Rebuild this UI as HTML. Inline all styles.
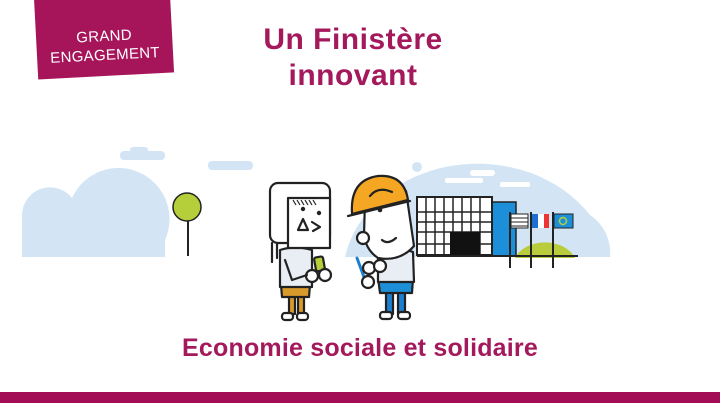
<!DOCTYPE html>
<html><head><meta charset="utf-8"><style>
html,body{margin:0;padding:0;background:#fff;width:720px;height:403px;overflow:hidden;position:relative;font-family:"Liberation Sans",sans-serif}
.badge{position:absolute;left:36px;top:-6px;width:136px;height:82px;background:#a6155a;transform:rotate(-3deg);color:#fff;font-size:15px;line-height:19px;text-align:center;letter-spacing:0.3px}
.badge div{position:absolute;left:0;right:0;top:33px}
.t1{position:absolute;left:200px;width:306px;top:22px;text-align:center;color:#a3195b;font-size:30px;line-height:36px;font-weight:bold;letter-spacing:0.5px}
.t2{position:absolute;left:0;width:720px;top:334px;text-align:center;color:#a3195b;font-size:25px;font-weight:bold;letter-spacing:0.2px}
.bar{position:absolute;left:0;top:392px;width:720px;height:11px;background:#a30d55}
svg{position:absolute;left:0;top:0}
</style></head><body>
<svg width="720" height="403" viewBox="0 0 720 403">
<g fill="#d3e5f5">
<path d="M22 257 L22 215 A28 28 0 0 1 72 198 A48 48 0 0 1 165 240 L165 257 Z"/>
<rect x="120" y="151" width="45" height="9" rx="4"/><rect x="130" y="147" width="18" height="6" rx="3"/>
<rect x="208" y="161" width="45" height="9" rx="4"/>
<path d="M345 257 A135 115 0 0 1 590 215 A45 45 0 0 1 610 257 Z"/>
<circle cx="417" cy="167" r="5"/>
</g>
<g fill="#fff"><rect x="470" y="170" width="25" height="6" rx="3"/><rect x="445" y="178" width="38" height="5" rx="2"/><rect x="500" y="182" width="30" height="5" rx="2"/></g>
<path d="M515 258 A32 24 0 0 1 575 258 Z" fill="#b9cc3b"/>
<line x1="188" y1="210" x2="188" y2="256" stroke="#222" stroke-width="2"/>
<circle cx="187" cy="207" r="14" fill="#b5cf3a" stroke="#222" stroke-width="1.5"/>
<rect x="490" y="202" width="26" height="54" fill="#1d8fd9" stroke="#222" stroke-width="1.5"/>
<rect x="417" y="197" width="75" height="58" fill="#fff" stroke="#222" stroke-width="2"/>
<g stroke="#222" stroke-width="1.5">
<line x1="426" y1="197" x2="426" y2="255"/><line x1="435" y1="197" x2="435" y2="255"/><line x1="444" y1="197" x2="444" y2="255"/><line x1="453" y1="197" x2="453" y2="232"/><line x1="462" y1="197" x2="462" y2="232"/><line x1="471" y1="197" x2="471" y2="232"/><line x1="480" y1="197" x2="480" y2="255"/>
<line x1="417" y1="212" x2="492" y2="212"/><line x1="417" y1="222" x2="492" y2="222"/><line x1="417" y1="232" x2="492" y2="232"/><line x1="417" y1="244" x2="492" y2="244"/>
</g>
<rect x="450" y="232" width="30" height="23" fill="#111"/>
<line x1="417" y1="256" x2="578" y2="256" stroke="#222" stroke-width="2"/>
<g stroke="#222" stroke-width="2"><line x1="510" y1="212" x2="510" y2="268"/><line x1="531" y1="212" x2="531" y2="268"/><line x1="553" y1="212" x2="553" y2="268"/></g>
<rect x="511" y="214" width="17" height="14" fill="#fff" stroke="#222"/>
<g stroke="#222"><line x1="511" y1="218" x2="528" y2="218"/><line x1="511" y1="222" x2="528" y2="222"/><line x1="511" y1="226" x2="528" y2="226"/></g>
<rect x="532" y="214" width="6" height="14" fill="#1d6fd0"/><rect x="538" y="214" width="6" height="14" fill="#fff"/><rect x="544" y="214" width="5" height="14" fill="#e33"/>
<rect x="554" y="214" width="19" height="14" fill="#1d8fd9" stroke="#222"/><circle cx="563" cy="221" r="3.5" fill="none" stroke="#b5cf3a" stroke-width="1.5"/>
<g stroke="#222" stroke-width="2.2" stroke-linejoin="round" stroke-linecap="round">
<rect x="289" y="296" width="6" height="18" fill="#d99a2b"/><rect x="298" y="296" width="6" height="18" fill="#d99a2b"/>
<path d="M281 285 L310 285 L309 297 L282 297 Z" fill="#d99a2b"/>
<path d="M280 250 Q295 245 312 250 L312 287 L280 287 Z" fill="#e9eef5"/>
<rect x="282" y="313" width="11" height="7" rx="3" fill="#fff"/><rect x="297" y="313" width="11" height="7" rx="3" fill="#fff"/>
<rect x="270" y="183" width="60" height="60" rx="8" fill="#fff"/>
<rect x="288" y="198" width="42" height="50" fill="#fff"/>
<line x1="272" y1="243" x2="272" y2="262"/><line x1="277" y1="243" x2="277" y2="258"/>
<path d="M298 230 L303 219 L308 230 Z" fill="#fff"/>
<path d="M312 222 L320 227 L313 231" fill="none"/>
<rect x="315" y="257" width="9" height="14" rx="2" fill="#b5cf3a" transform="rotate(-10 319 264)"/>
<circle cx="312" cy="276" r="6" fill="#fff"/><circle cx="325" cy="275" r="6" fill="#fff"/>
<path d="M285 260 L292 280 L307 275" fill="none"/>
</g>
<circle cx="303" cy="209" r="2.2" fill="#222"/><circle cx="319" cy="213" r="2.2" fill="#222"/>
<g stroke="#222" stroke-width="1.2"><line x1="293" y1="200" x2="296" y2="205"/><line x1="297" y1="200" x2="300" y2="205"/><line x1="301" y1="200" x2="304" y2="205"/><line x1="305" y1="200" x2="308" y2="205"/><line x1="309" y1="200" x2="312" y2="205"/><line x1="313" y1="200" x2="316" y2="205"/></g>
<g stroke="#222" stroke-width="2.2" stroke-linejoin="round" stroke-linecap="round">
<rect x="386" y="290" width="7" height="24" fill="#1d7fd0"/><rect x="398" y="290" width="7" height="24" fill="#1d7fd0"/>
<path d="M378 278 L413 278 L412 293 L380 293 Z" fill="#1d8fd9"/>
<path d="M378 255 Q395 245 413 252 L414 282 L378 282 Z" fill="#e9eef5"/>
<rect x="380" y="312" width="12" height="7" rx="3" fill="#fff"/><rect x="398" y="312" width="12" height="7" rx="3" fill="#fff"/>
<path d="M365 200 L406 191 L414 246 Q400 262 378 258 Q366 250 364 235 Z" fill="#fff"/>
<circle cx="363" cy="238" r="6" fill="#fff"/>
<path d="M352 213 Q350 180 378 176 Q404 174 408 200 L352 214 Z" fill="#f5a623"/>
<path d="M348 216 L410 201" fill="none"/>
<path d="M370 196 Q378 186 392 192" fill="none"/>
<path d="M382 240 Q388 245 396 238" fill="none"/>
<line x1="357" y1="258" x2="364" y2="277" stroke="#1d7fd0" stroke-width="3"/>
<circle cx="369" cy="268" r="6" fill="#fff"/><circle cx="380" cy="266" r="6" fill="#fff"/><circle cx="368" cy="282" r="6" fill="#fff"/>
</g>
<circle cx="380" cy="210" r="2.3" fill="#222"/>
</svg>
<div class="badge"><div>GRAND<br>ENGAGEMENT</div></div>
<div class="t1">Un Finistère<br>innovant</div>
<div class="t2">Economie sociale et solidaire</div>
<div class="bar"></div>
</body></html>
